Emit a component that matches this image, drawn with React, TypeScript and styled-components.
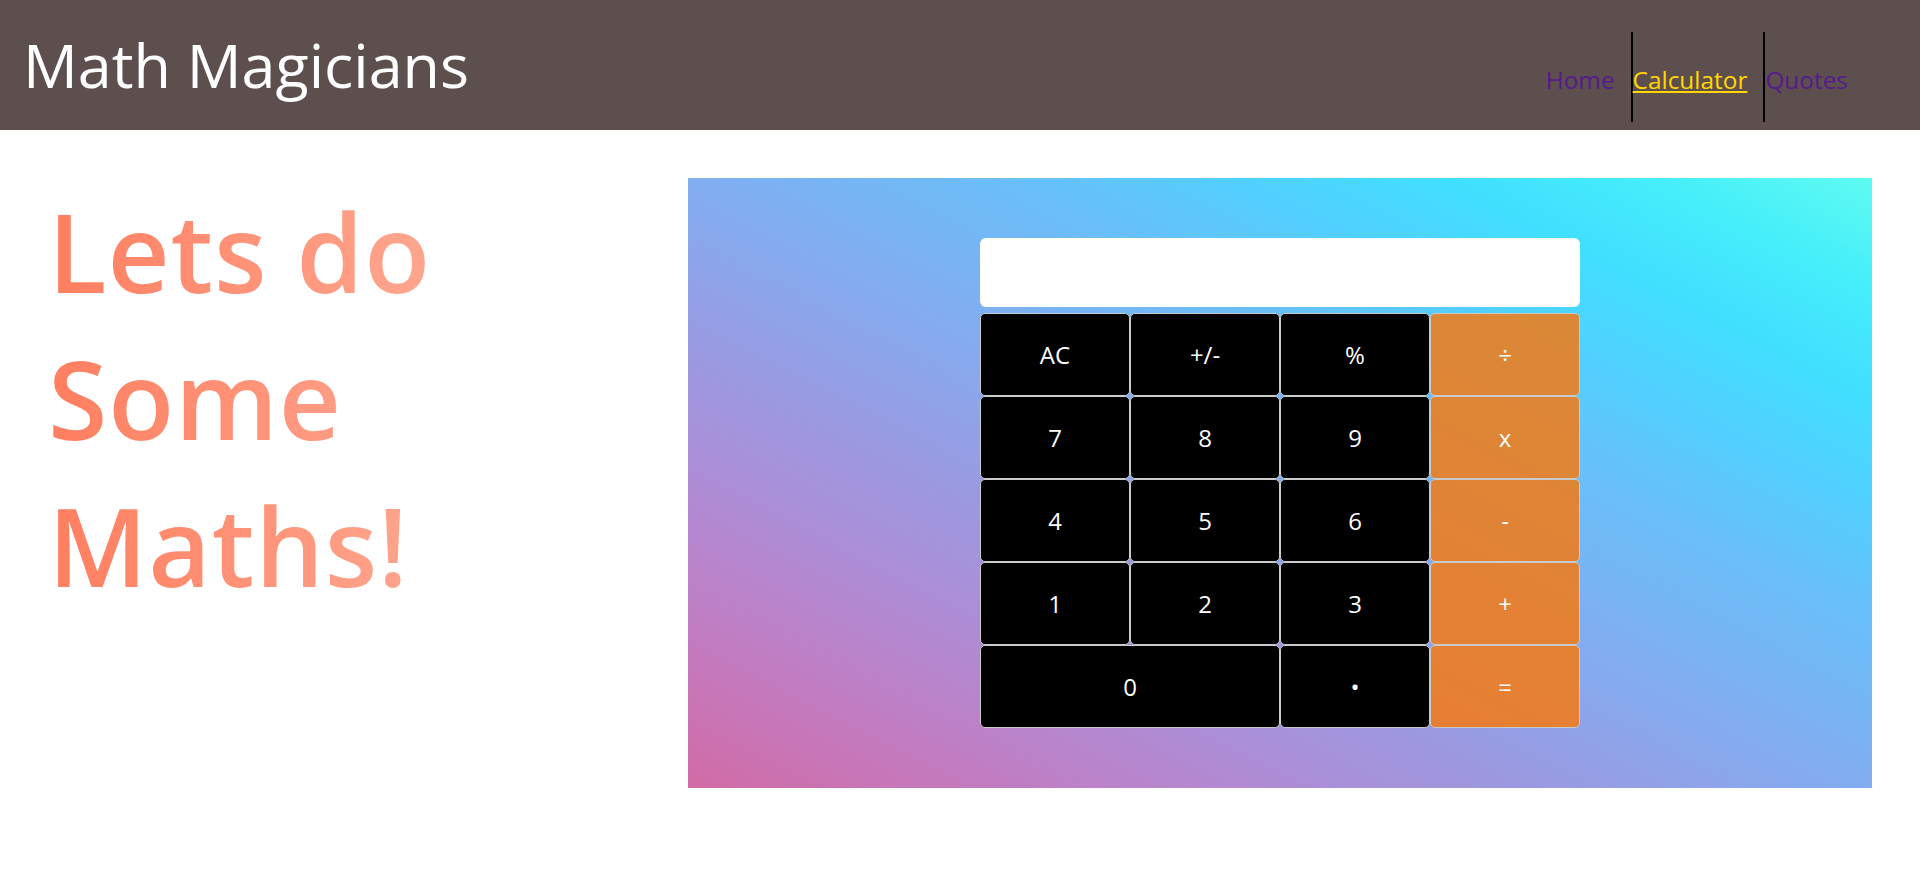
import * as React from 'react';
import styled, { createGlobalStyle } from 'styled-components';

const GlobalStyle = createGlobalStyle`
  * {
    box-sizing: border-box;
  }

  body {
    margin: 0;
    font-family: "Open Sans", "Liberation Sans", sans-serif;
    background: #fff;
  }
`;

const Header = styled.header`
  display: flex;
  justify-content: space-between;
  align-items: flex-start;
  height: 130px;
  background-color: #5e4f4f;
`;

const Title = styled.h1`
  margin: 0;
  padding: 23px 23px 24px;
  font-size: 61px;
  font-weight: 400;
  line-height: normal;
  color: #fff;
`;

const NavList = styled.ul`
  display: flex;
  list-style: none;
  margin: 0;
  padding: 32px 56px 0 0;
`;

const NavItem = styled.li<{ $divider?: boolean }>`
  display: flex;
  align-items: center;
  height: 90px;
  padding: 4px 16px 0 0;
  border-left: ${(p) => (p.$divider ? '2px solid #000' : 'none')};
`;

const NavLink = styled.a<{ $active?: boolean }>`
  font-size: 24.4px;
  color: ${(p) => (p.$active ? '#ffd700' : '#551a8b')};
  text-decoration: ${(p) => (p.$active ? 'underline' : 'none')};
`;

const Main = styled.main`
  display: grid;
  grid-template-columns: 640px 1fr;
  padding: 48px;
`;

const Hero = styled.h2`
  display: inline-block;
  margin: 0;
  font-size: 108px;
  font-weight: 600;
  letter-spacing: 0.8px;
  line-height: normal;
  background-image: linear-gradient(to right, #ff7e5f, #ffa68f);
  -webkit-background-clip: text;
  background-clip: text;
  color: transparent;
`;

const Panel = styled.section`
  padding: 60px 0;
  background-image: linear-gradient(
    to right top,
    #d16ba5,
    #c777b9,
    #ba83ca,
    #aa8fd8,
    #9a9ae1,
    #8aa7ec,
    #79b3f4,
    #69bff8,
    #52cffe,
    #41dfff,
    #46eefa,
    #5ffbf1
  );
`;

const Calculator = styled.div`
  width: 600px;
  margin: 0 auto;
`;

const Display = styled.div`
  height: 69px;
  margin-bottom: 6px;
  padding: 0 16px;
  border-radius: 6px;
  background: #fff;
  display: flex;
  align-items: center;
  justify-content: flex-end;
  font-size: 32px;
`;

const Keys = styled.div`
  display: grid;
  grid-template-columns: repeat(4, 150px);
  grid-auto-rows: 83px;
`;

const Key = styled.button<{ $op?: boolean; $wide?: boolean }>`
  grid-column: ${(p) => (p.$wide ? 'span 2' : 'auto')};
  border: 1px solid #cacaca;
  border-radius: 5px;
  background: ${(p) => (p.$op ? 'rgba(245, 121, 17, 0.84)' : '#000')};
  color: #fff;
  font-family: "Open Sans", "Liberation Sans", sans-serif;
  font-size: 24px;
  cursor: pointer;
`;

const keys: { label: string; op?: boolean; wide?: boolean }[] = [
  { label: 'AC' },
  { label: '+/-' },
  { label: '%' },
  { label: '÷', op: true },
  { label: '7' },
  { label: '8' },
  { label: '9' },
  { label: 'x', op: true },
  { label: '4' },
  { label: '5' },
  { label: '6' },
  { label: '-', op: true },
  { label: '1' },
  { label: '2' },
  { label: '3' },
  { label: '+', op: true },
  { label: '0', wide: true },
  { label: '•' },
  { label: '=', op: true },
];

export default function App() {
  return (
    <>
      <GlobalStyle />
      <Header>
        <Title>Math Magicians</Title>
        <nav>
          <NavList>
            <NavItem>
              <NavLink href="#">Home</NavLink>
            </NavItem>
            <NavItem $divider>
              <NavLink href="#" $active>Calculator</NavLink>
            </NavItem>
            <NavItem $divider>
              <NavLink href="#">Quotes</NavLink>
            </NavItem>
          </NavList>
        </nav>
      </Header>
      <Main>
        <div>
          <Hero>
            Lets do
            <br />
            Some
            <br />
            Maths!
          </Hero>
        </div>
        <Panel>
          <Calculator>
            <Display />
            <Keys>
              {keys.map((k) => (
                <Key key={k.label} $op={k.op} $wide={k.wide}>
                  {k.label}
                </Key>
              ))}
            </Keys>
          </Calculator>
        </Panel>
      </Main>
    </>
  );
}
